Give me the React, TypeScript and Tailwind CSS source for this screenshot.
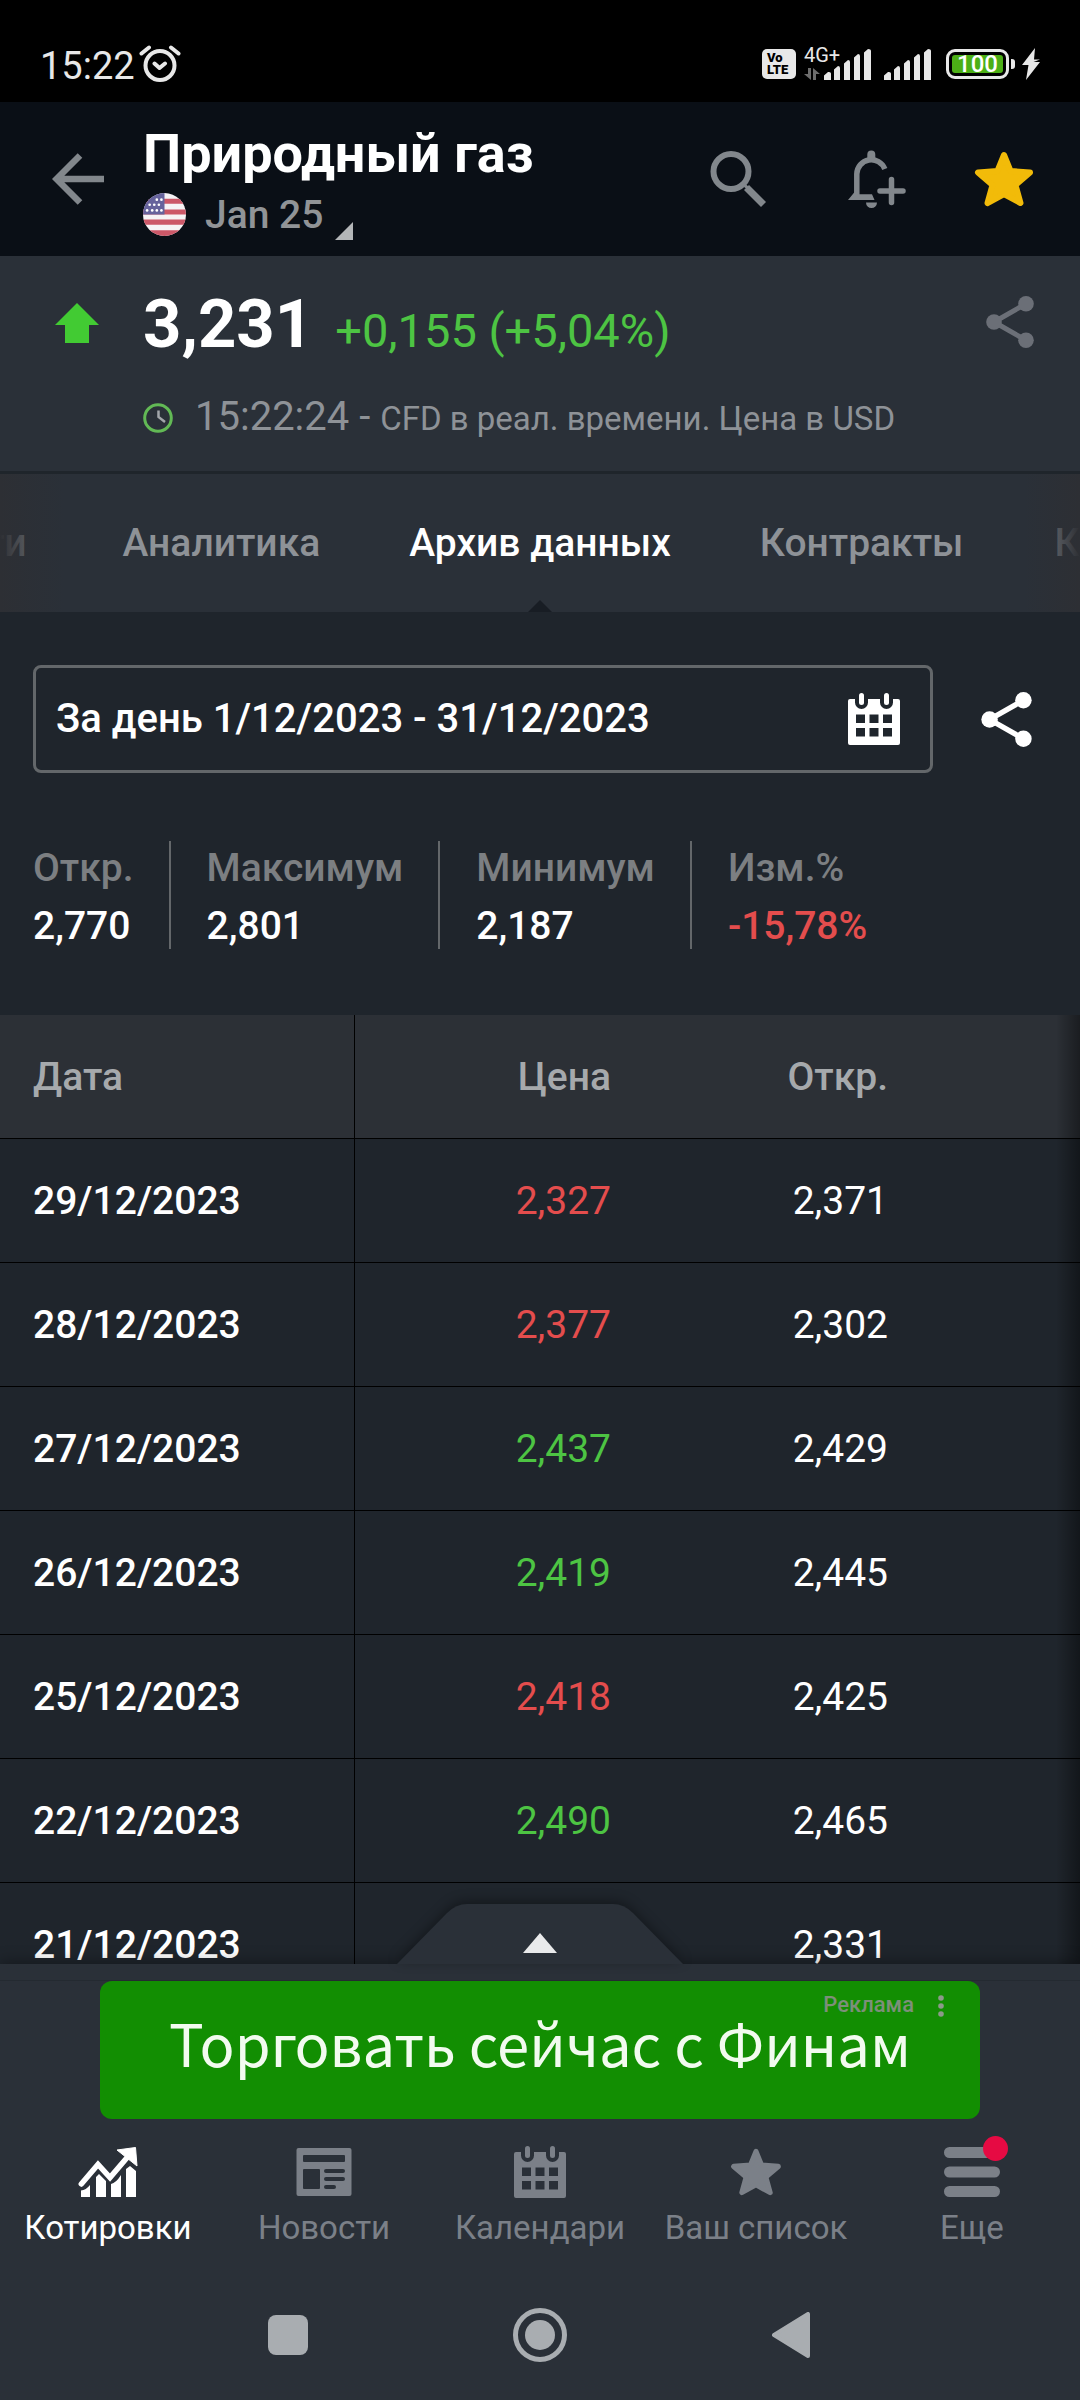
import React from 'react';
import clsx from 'clsx';

// ============================================================
// TYPES
// ============================================================

interface IconProps {
  className?: string;
}

interface HistoryRow {
  date: string;
  price: string;
  open: string;
  up: boolean;
}

// ============================================================
// DATA
// ============================================================

const STATS = [
  { label: 'Откр.', value: '2,770' },
  { label: 'Максимум', value: '2,801' },
  { label: 'Минимум', value: '2,187' },
  { label: 'Изм.%', value: '-15,78%', negative: true },
];

const ROWS: HistoryRow[] = [
  { date: '29/12/2023', price: '2,327', open: '2,371', up: false },
  { date: '28/12/2023', price: '2,377', open: '2,302', up: false },
  { date: '27/12/2023', price: '2,437', open: '2,429', up: true },
  { date: '26/12/2023', price: '2,419', open: '2,445', up: true },
  { date: '25/12/2023', price: '2,418', open: '2,425', up: false },
  { date: '22/12/2023', price: '2,490', open: '2,465', up: true },
  { date: '21/12/2023', price: '', open: '2,331', up: true },
];

// ============================================================
// ICONS
// ============================================================

const AlarmIcon = ({ className }: IconProps) => (
  <svg viewBox="0 0 42 38" className={className} fill="none" stroke="currentColor" strokeWidth="4" strokeLinecap="round" strokeLinejoin="round">
    <circle cx="21" cy="20.5" r="14.5" />
    <path d="M2.5 8.5 10 2.5M32 2.5l7.5 6M15.5 18.5l5 4.5 5.5-4.5" />
  </svg>
);

const SignalIcon = ({ className }: IconProps) => (
  <svg viewBox="0 0 48 31" className={className} fill="currentColor">
    <path d="M0 31v-4.500l4-3.500q3-.5 3 1.500V31zM10 31V20.500l4-3.500q2 0 2 2V31zM20 31V14.500l4-3.500q2 0 2 2V31zM30 31V8.500L34 5q2 0 2 2v24zM40 31V3.500L44 0q3 0 3 2v29z" />
  </svg>
);

const BoltIcon = ({ className }: IconProps) => (
  <svg viewBox="0 0 18 32" className={className} fill="currentColor">
    <path d="M13 0 0 17h6.500L4 32l14-18h-6.500l6.500-2.500h-6z" />
  </svg>
);

const BackIcon = ({ className }: IconProps) => (
  <svg viewBox="0 0 52 52" className={className} fill="none" stroke="currentColor" strokeWidth="6.500">
    <path d="M28 2.500 4.500 26 28 49.500M5 26h47" />
  </svg>
);

const FlagIcon = ({ className }: IconProps) => (
  <svg viewBox="0 0 42 42" className={className}>
    <clipPath id="flag">
      <circle cx="21" cy="21" r="21" />
    </clipPath>
    <g clipPath="url(#flag)">
      <path fill="#f6f3f5" d="M0 0h42v42H0z" />
      <path fill="#cc5868" d="M0 5.500h42v5H0zM0 16h42v5H0zM0 26h42v5H0zM0 36.500h42V42H0z" />
      <path fill="#66639c" d="M0 0h21v21H0z" />
      <g fill="#fff">
        <circle cx="13.5" cy="6.5" r="1.3" />
        <circle cx="18" cy="6.5" r="1.3" />
        <circle cx="6.5" cy="11.5" r="1.3" />
        <circle cx="11" cy="11.5" r="1.3" />
        <circle cx="15.5" cy="11.5" r="1.3" />
        <circle cx="4" cy="17" r="1.3" />
        <circle cx="9" cy="17" r="1.3" />
        <circle cx="13.5" cy="17" r="1.3" />
        <circle cx="18" cy="17" r="1.3" />
      </g>
    </g>
  </svg>
);

const SearchIcon = ({ className }: IconProps) => (
  <svg viewBox="0 0 58 58" className={className} fill="none" stroke="currentColor" strokeWidth="6">
    <circle cx="21" cy="21.5" r="17.5" />
    <path strokeWidth="3" d="m33 34 6 5" />
    <path strokeWidth="7" d="m36.500 37.500 17 17" />
  </svg>
);

const BellPlusIcon = ({ className }: IconProps) => (
  <svg viewBox="0 0 58 58" className={className} fill="none" stroke="currentColor" strokeWidth="5.500">
    <path d="M8.800 46V24a14.500 14.500 0 0 1 28-5" />
    <path fill="currentColor" stroke="none" d="M0 50l7-8.500 3 2.800h14L26.500 50zM19.300 9V4.500a4 4 0 0 1 8 0V9zM18 52.500h11a5.500 5.500 0 0 1-11 0z" />
    <path strokeLinecap="round" d="M32 41h23M43.500 29.500v23" />
  </svg>
);

const StarIcon = ({ className }: IconProps) => (
  <svg viewBox="0 0 60 56" className={className} fill="currentColor" stroke="currentColor" strokeWidth="6" strokeLinejoin="round">
    <path d="m30 4 6.500 16 19.500 1.500L41.500 34l5 18L30 43 13.500 52l5-18L4 21.500 23.500 20z" />
  </svg>
);

const ShareIcon = ({ className }: IconProps) => (
  <svg viewBox="0 0 48 52" className={className} fill="currentColor">
    <path fill="none" stroke="currentColor" strokeWidth="5" d="M40 7.800 8 26l32 18.200" />
    <circle cx="40" cy="7.8" r="7.8" />
    <circle cx="8" cy="26" r="7.8" />
    <circle cx="40" cy="44.2" r="7.8" />
  </svg>
);

const UpArrowIcon = ({ className }: IconProps) => (
  <svg viewBox="0 0 44 40" className={className} fill="currentColor">
    <path d="m22 0 22 22H34v18H10V22H0z" />
  </svg>
);

const ClockIcon = ({ className }: IconProps) => (
  <svg viewBox="0 0 30 30" className={className} fill="none" strokeWidth="3">
    <circle cx="15" cy="15" r="13.3" stroke="#62b955" />
    <path stroke="#a3a6aa" strokeWidth="2.500" d="M15.500 7.500V14l6.500 5" />
  </svg>
);

const CalendarIcon = ({ className }: IconProps) => (
  <svg viewBox="0 0 52 52" className={className} fill="currentColor">
    <path
      fillRule="evenodd"
      d="M2 6h5v3.500a6.500 6.500 0 0 0 13 0V6h12v3.500a6.500 6.500 0 0 0 13 0V6h5a2 2 0 0 1 2 2v42a2 2 0 0 1-2 2H2a2 2 0 0 1-2-2V8a2 2 0 0 1 2-2zM8 21.500V30h9v-8.500zM21.500 21.500V30h9v-8.500zM35 21.500V30h9v-8.500zM8 35v8.500h9V35zM21.500 35v8.500h9V35zM35 35v8.500h9V35z"
    />
    <rect x="11" width="5" height="12" rx="2.5" />
    <rect x="36" width="5" height="12" rx="2.5" />
  </svg>
);

const TrendIcon = ({ className }: IconProps) => (
  <svg viewBox="0 0 60 52" className={className} fill="currentColor">
    <path fill="none" stroke="currentColor" strokeWidth="5.500" strokeLinecap="round" d="M3.300 38 20 18.500l12 13L50 10.500" />
    <path stroke="currentColor" strokeLinejoin="round" d="m39 4 18.500-2.500L59 20z" />
    <path d="M3 51v-6.500q5-.5 9-5.500v12zM18 51V31l3-3 7 7v16zM33 51V38q5-1 10-9v22zM48 51V23l4-3 6 5v26z" />
  </svg>
);

const NewsIcon = ({ className }: IconProps) => (
  <svg viewBox="0 0 56 48" className={className} fill="currentColor">
    <path
      fillRule="evenodd"
      d="M2.500 0h51a2 2 0 0 1 2 2v44a2 2 0 0 1-2 2h-51a2 2 0 0 1-2-2V2a2 2 0 0 1 2-2zM8 7a1 1 0 0 0-1 1v5a1 1 0 0 0 1 1h40a1 1 0 0 0 1-1V8a1 1 0 0 0-1-1zM8 21a1 1 0 0 0-1 1v18a1 1 0 0 0 1 1h15a1 1 0 0 0 1-1V22a1 1 0 0 0-1-1zM30 21a2 2 0 0 0 0 4h17a2 2 0 0 0 0-4zM30 29a2 2 0 0 0 0 4h17a2 2 0 0 0 0-4zM30 37a2 2 0 0 0 0 4h8a2 2 0 0 0 0-4z"
    />
  </svg>
);

const MenuIcon = ({ className }: IconProps) => (
  <svg viewBox="0 0 56 50" className={className} fill="currentColor">
    <rect width="56" height="11" rx="5.5" />
    <rect y="19.5" width="56" height="11" rx="5.5" />
    <rect y="39" width="56" height="11" rx="5.5" />
  </svg>
);

// ============================================================
// SECTIONS
// ============================================================

const StatusBar = () => (
  <div className="flex h-[102px] shrink-0 items-center justify-between bg-black pt-[26px] pr-10 pl-10 text-[#e8e8e8]">
    <div className="flex items-center gap-1">
      <span className="pt-1 text-[38px] leading-[44px]">15:22</span>
      <AlarmIcon className="h-[38px] w-[42px]" />
    </div>
    <div className="flex items-center">
      <div className="flex h-[30px] w-[34px] flex-col justify-center rounded-[5px] bg-[#e8e8e8] pl-[5px] text-[13px] leading-[12px] font-black text-black">
        <span>Vo</span>
        <span>LTE</span>
      </div>
      <div className="relative ml-2 flex h-[31px] w-[68px] items-end justify-end">
        <span className="absolute -top-[6px] left-0 text-[20px] leading-[24px]">4G+</span>
        <svg viewBox="0 0 16 12" className="mr-[4px] h-3 w-4 shrink-0 fill-[#6d6d6d]">
          <path d="M4 0h3v12L0 6h4zM9 12V0l7 6h-4v6z" />
        </svg>
        <SignalIcon className="h-[31px] w-12 shrink-0" />
      </div>
      <SignalIcon className="ml-3 h-[31px] w-12" />
      <div className="ml-[14px] flex h-[30px] w-[63px] rounded-[9px] border-3 border-[#e8e8e8] p-[3px]">
        <span className="flex-1 rounded-[3px] bg-[#4caf16] text-center text-[24px] leading-[19px] font-medium text-white">100</span>
      </div>
      <span className="ml-[2px] h-[10px] w-[4px] rounded-r-[3px] bg-[#e8e8e8]" />
      <BoltIcon className="ml-[7px] h-8 w-[18px]" />
    </div>
  </div>
);

const Header = () => (
  <header className="flex h-[154px] shrink-0 items-center bg-[#0a0f16] pr-[46px] pl-[52px] text-[#82878c]">
    <button aria-label="Назад">
      <BackIcon className="h-[52px] w-[52px]" />
    </button>
    <div className="ml-[39px] flex flex-1 flex-col pt-[3px]">
      <h1 className="text-[54px] leading-[64px] font-bold text-white">Природный газ</h1>
      <button className="flex items-center pt-1 text-[39px] leading-[50px] font-medium text-[#919497]">
        <FlagIcon className="mr-[19px] h-[43px] w-[43px]" />
        Jan 25
        <svg viewBox="0 0 18 18" className="ml-3 h-[18px] w-[18px] self-end fill-[#b3b6b8]">
          <path d="M18 0v18H0z" />
        </svg>
      </button>
    </div>
    <button aria-label="Поиск" className="mr-20">
      <SearchIcon className="h-[58px] w-[58px]" />
    </button>
    <button aria-label="Добавить уведомление" className="mr-[68px]">
      <BellPlusIcon className="h-[58px] w-[58px]" />
    </button>
    <button aria-label="В избранном" className="text-[#f2bb09]">
      <StarIcon className="h-[56px] w-[60px]" />
    </button>
  </header>
);

const Quote = () => (
  <section className="flex shrink-0 items-start border-b-3 border-[#1f252b] bg-[#2a3038] pt-[26px] pr-[46px] pb-[26px] pl-[55px]">
    <UpArrowIcon className="mt-[21px] h-10 w-11 text-[#42cb33]" />
    <div className="ml-11 flex-1">
      <div className="flex items-baseline gap-[22px]">
        <span className="text-[67px] leading-[84px] font-bold text-white">3,231</span>
        <span className="text-[47px] leading-[84px] text-[#4dc443]">+0,155 (+5,04%)</span>
      </div>
      <div className="mt-[18px] flex h-[54px] items-center text-[#8e9297]">
        <ClockIcon className="mr-[22px] h-[30px] w-[30px]" />
        <p className="text-[33px] leading-[50px]">
          <span className="text-[40px]">15:22:24 - </span>
          CFD в реал. времени. Цена в USD
        </p>
      </div>
    </div>
    <button aria-label="Поделиться котировкой" className="mt-[14px] text-[#6b6f77]">
      <ShareIcon className="h-[52px] w-12" />
    </button>
  </section>
);

const Tabs = () => (
  <nav className="relative flex h-[138px] shrink-0 items-center overflow-hidden bg-[#2a3038] text-[39px] leading-[46px] font-medium whitespace-nowrap text-[#8e9297]">
    <div className="flex w-0 flex-1 justify-end gap-24">
      <a href="#news">Новости</a>
      <a href="#analysis">Аналитика</a>
    </div>
    <a href="#archive" className="px-[89px] text-white">Архив данных</a>
    <div className="flex w-0 flex-1 gap-[91px]">
      <a href="#contracts">Контракты</a>
      <a href="#comments">Комментарии</a>
    </div>
    <span className="absolute inset-y-0 left-0 w-16 bg-linear-to-r from-[#2d2f34] to-transparent" />
    <span className="absolute inset-y-0 right-0 w-14 bg-linear-to-l from-[#2d2f34] to-transparent" />
    <svg viewBox="0 0 24 12" className="absolute bottom-0 left-1/2 h-3 w-6 -translate-x-1/2 fill-[#181d24]">
      <path d="M12 0l12 12H0z" />
    </svg>
  </nav>
);

const Filters = () => (
  <>
    <div className="flex items-center pt-[53px] pr-12 pl-[33px]">
      <button className="flex h-[108px] flex-1 items-center justify-between rounded-lg border-3 border-[#63676a] pr-[30px] pl-5 text-[40px] font-medium">
        За день 1/12/2023 - 31/12/2023
        <CalendarIcon className="h-[52px] w-[52px]" />
      </button>
      <button aria-label="Поделиться" className="ml-12">
        <ShareIcon className="h-[55px] w-[51px]" />
      </button>
    </div>
    <dl className="mt-[68px] flex px-[33px] text-[39px] leading-[46px] font-medium">
      {STATS.map(({ label, value, negative }, i) => (
        <div key={label} className={clsx('flex flex-col gap-3 pt-1', i > 0 && 'ml-[35px] border-l-2 border-[#63676a] pl-9')}>
          <dt className="text-[#7c7f82]">{label}</dt>
          <dd className={negative ? 'text-[#e44d4d]' : 'text-white'}>{value}</dd>
        </div>
      ))}
    </dl>
  </>
);

const HistoryTable = () => (
  <div className="relative mt-[66px]">
    <table className="w-full table-fixed border-separate border-spacing-0 text-[39px] leading-[46px]">
      <thead>
        <tr className="h-[124px] bg-[#2c3036] text-[#a6a9ac] *:border-b *:border-black *:p-0 *:font-medium">
          <th className="w-[355px] border-r text-left">
            <span className="pl-[33px]">Дата</span>
          </th>
          <th className="w-[256px] text-right">Цена</th>
          <th className="w-[277px] text-right">Откр.</th>
          <th />
        </tr>
      </thead>
      <tbody>
        {ROWS.map((row) => (
          <tr key={row.date} className="h-[124px] *:border-b *:border-black *:p-0">
            <td className="border-r font-medium">
              <span className="pl-[33px]">{row.date}</span>
            </td>
            <td className={clsx('text-right', row.up ? 'text-[#4dc443]' : 'text-[#e44d4d]')}>{row.price}</td>
            <td className="text-right">{row.open}</td>
            <td />
          </tr>
        ))}
      </tbody>
    </table>
    <span className="absolute inset-y-0 right-0 w-6 bg-linear-to-l from-black/40 to-transparent" />
  </div>
);

const NAV_ITEMS = [
  { label: 'Котировки', icon: <TrendIcon className="h-[52px] w-[60px]" />, active: true },
  { label: 'Новости', icon: <NewsIcon className="h-12 w-14" /> },
  { label: 'Календари', icon: <CalendarIcon className="h-[52px] w-[54px]" /> },
  { label: 'Ваш список', icon: <StarIcon className="h-12 w-[52px]" /> },
  { label: 'Еще', icon: <MenuIcon className="h-[50px] w-14" />, badge: true },
];

const BottomPanel = () => (
  <footer className="relative shrink-0 bg-[#2a3038] shadow-[0_-2px_14px_rgba(0,0,0,0.35)]">
    {/* pull-up handle sits above the panel edge */}
    <button aria-label="Развернуть" className="absolute bottom-full left-1/2 -translate-x-1/2">
      <svg viewBox="0 0 286 60" className="h-[60px] w-[286px] overflow-visible drop-shadow-[0_-3px_6px_rgba(0,0,0,0.35)]">
        <path fill="#2a3038" d="M0 60 50 9q9-9 20-9h146q11 0 20 9l50 51z" />
        <path fill="#e9eaeb" d="m143 29 17 20h-34z" />
      </svg>
    </button>
    <div className="border-b border-[#242a31] pt-4" />
    <div className="px-[100px]">
      <a href="#ad" className="relative flex h-[138px] items-center justify-center rounded-xl bg-[#128e02]">
        <span className="pb-4 font-['Noto_Sans_CJK_SC',sans-serif] text-[58px] leading-[80px] text-[#f2fbef]">Торговать сейчас с Финам</span>
        <span className="absolute top-[10px] right-[66px] text-[22px] leading-[28px] font-medium text-[#7d8f7a]">Реклама</span>
        <svg viewBox="0 0 6 22" className="absolute top-[14px] right-9 h-[22px] w-[6px] fill-[#8c9a8a]">
          <circle cx="3" cy="3" r="2.8" />
          <circle cx="3" cy="11" r="2.8" />
          <circle cx="3" cy="19" r="2.8" />
        </svg>
      </a>
    </div>
    <nav className="grid grid-cols-5 pt-[26px] text-[33px] leading-[40px] text-[#7b8088]">
      {NAV_ITEMS.map(({ label, icon, active, badge }) => (
        <a key={label} href="#nav" className={clsx('flex flex-col items-center gap-[9px] whitespace-nowrap', active && 'text-white')}>
          <span className="relative flex h-[54px] items-center">
            {icon}
            {badge && <span className="absolute -top-[9px] -right-2 h-[25px] w-[25px] rounded-full bg-[#e60a43]" />}
          </span>
          {label}
        </a>
      ))}
    </nav>
    <div className="flex items-center justify-center gap-[205px] pt-[60px] pr-[3px] pb-[38px] text-[#a9adb1]">
      <button aria-label="Недавние" className="h-10 w-10 rounded-lg bg-[#a9adb1]" />
      <button aria-label="Домой">
        <svg viewBox="0 0 54 54" className="h-[54px] w-[54px]" fill="currentColor">
          <circle cx="27" cy="27" r="24.5" fill="none" stroke="currentColor" strokeWidth="5" />
          <circle cx="27" cy="27" r="15" />
        </svg>
      </button>
      <button aria-label="Назад к приложению">
        <svg viewBox="0 0 38 46" className="h-[46px] w-[38px]" fill="currentColor" stroke="currentColor" strokeWidth="4" strokeLinejoin="round">
          <path d="M2 23 36 2v42z" />
        </svg>
      </button>
    </div>
  </footer>
);

// ============================================================
// PAGE
// ============================================================

export default function App() {
  return (
    <div className="flex h-screen flex-col overflow-hidden bg-[#1f252c] font-[Roboto,sans-serif] text-white">
      <StatusBar />
      <Header />
      <Quote />
      <Tabs />
      <main className="min-h-0 flex-1 overflow-hidden">
        <Filters />
        <HistoryTable />
      </main>
      <BottomPanel />
    </div>
  );
}
